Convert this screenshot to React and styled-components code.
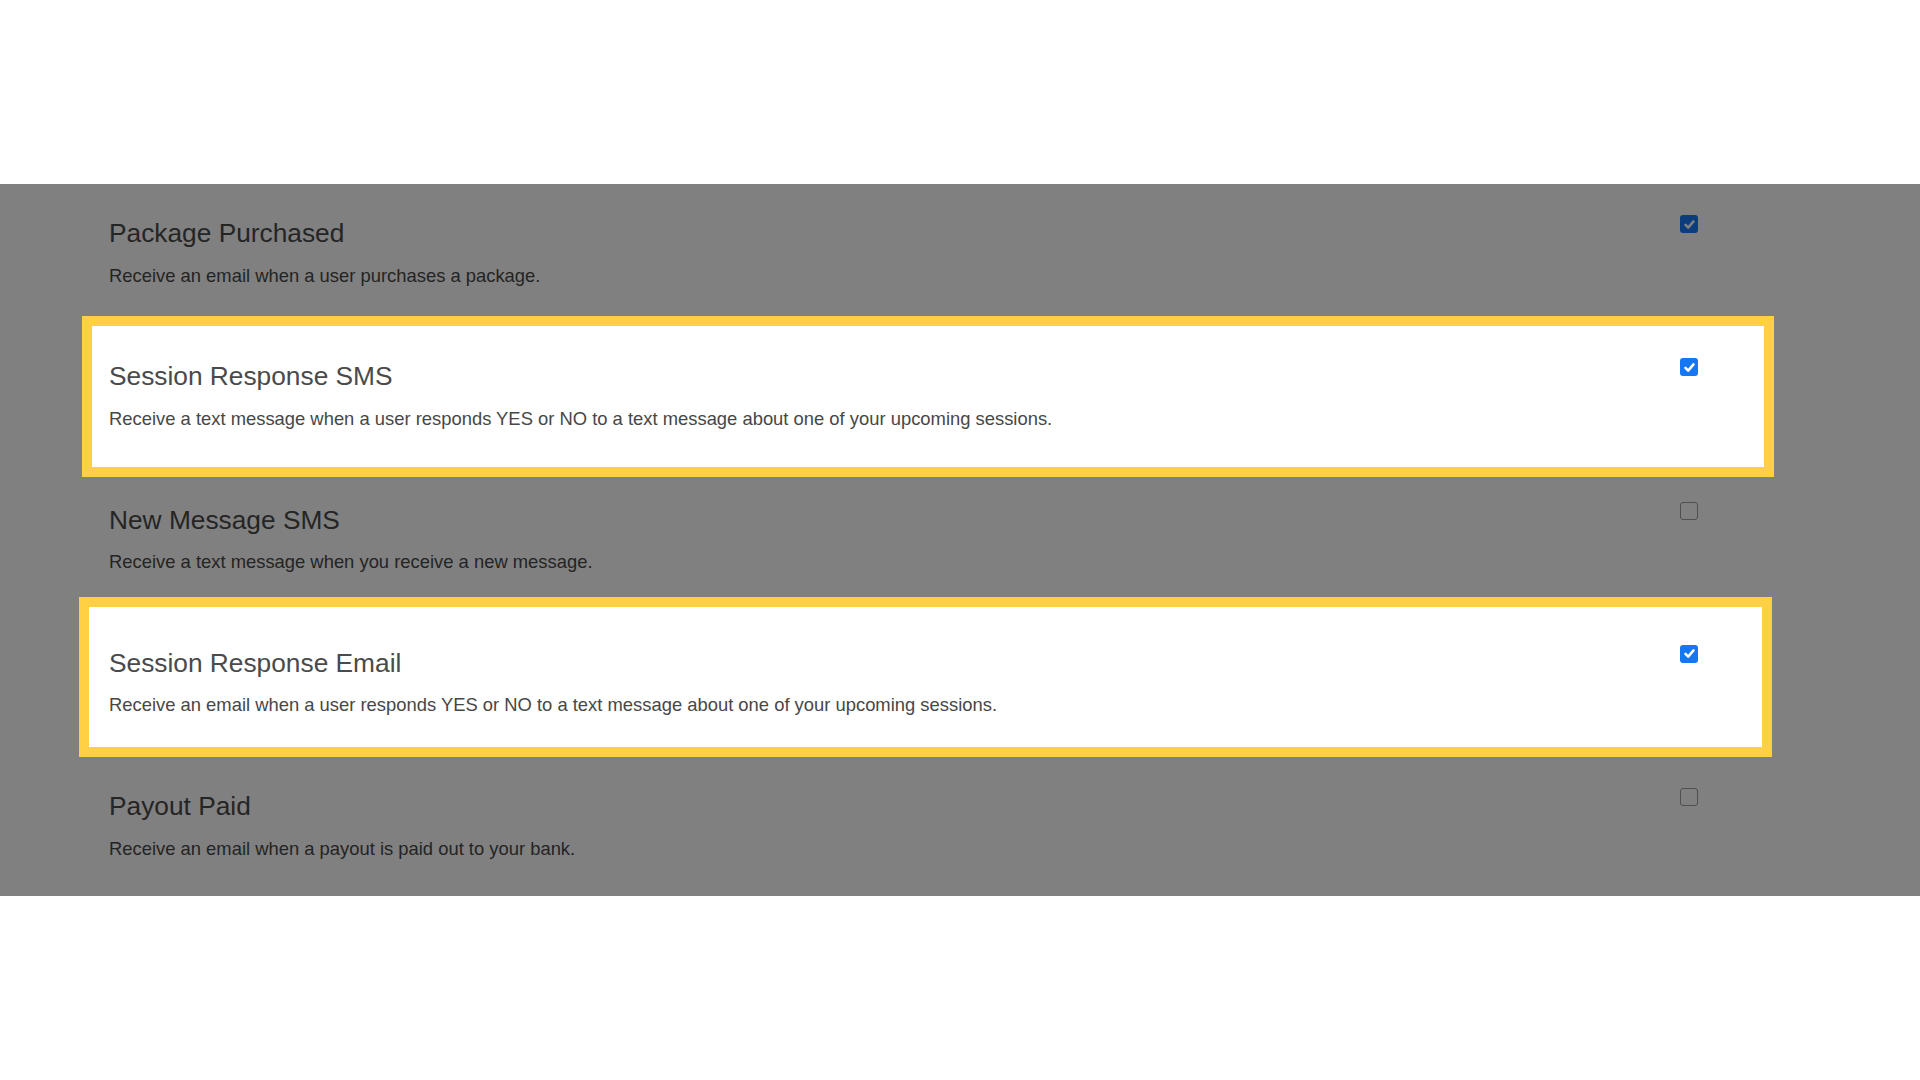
import React from "react";
import styled, { createGlobalStyle } from "styled-components";

const GlobalStyle = createGlobalStyle`
  * { box-sizing: border-box; }
  html, body { margin: 0; padding: 0; background: #fff; }
  body { font-family: "Liberation Sans", Arial, sans-serif; }
`;

// frame = how far the yellow highlight sticks out [top, right, bottom, left]
const settings = [
  {
    id: 1,
    title: "Package Purchased",
    desc: "Receive an email when a user purchases a package.",
    checked: true,
  },
  {
    id: 2,
    title: "Session Response SMS",
    desc: "Receive a text message when a user responds YES or NO to a text message about one of your upcoming sessions.",
    checked: true,
    frame: [11, 11, 6, 8],
  },
  {
    id: 3,
    title: "New Message SMS",
    desc: "Receive a text message when you receive a new message.",
    checked: false,
  },
  {
    id: 4,
    title: "Session Response Email",
    desc: "Receive an email when a user responds YES or NO to a text message about one of your upcoming sessions.",
    checked: true,
    frame: [17, 9, 0, 11],
  },
  {
    id: 5,
    title: "Payout Paid",
    desc: "Receive an email when a payout is paid out to your bank.",
    checked: false,
  },
];

const Check = ({ checked, active }) => (
  <Box $checked={checked} $active={active}>
    {checked && (
      <svg width="13" height="13" viewBox="0 0 12 12">
        <path
          d="M2.3 6.3 L4.8 8.9 L9.7 3.1"
          fill="none"
          stroke={active ? "#fff" : "#808080"}
          strokeWidth="2.3"
          strokeLinecap="round"
          strokeLinejoin="round"
        />
      </svg>
    )}
  </Box>
);

const App = () => {
  return (
    <Page>
      <GlobalStyle />
      <Band>
        <List>
          {settings.map((opt) => {
            const active = !!opt.frame;
            return (
              <Row key={opt.id} $frame={opt.frame}>
                <Text>
                  <Title $active={active}>{opt.title}</Title>
                  <Desc $active={active}>{opt.desc}</Desc>
                </Text>
                <Check checked={opt.checked} active={active} />
              </Row>
            );
          })}
        </List>
      </Band>
    </Page>
  );
};

const Page = styled.div`
  width: 100%;
  min-height: 100vh;
  padding-top: 184px;
  background: #fff;
`;

const Band = styled.div`
  width: 100%;
  background: #808080;
`;

const List = styled.div`
  margin-left: 90px;
  width: 1673px;
  display: flex;
  flex-direction: column;
`;

const Row = styled.div`
  display: grid;
  grid-template-columns: 1fr auto;
  align-items: start;
  height: 143.3px;
  padding: 31px 65px 0 19px;
  position: relative;
  isolation: isolate;

  &:last-child {
    height: 139px;
  }

  /* highlight frame drawn over the dimmed screenshot */
  &::before {
    content: "";
    display: ${(p) => (p.$frame ? "block" : "none")};
    position: absolute;
    top: ${(p) => (p.$frame ? -p.$frame[0] : 0)}px;
    right: ${(p) => (p.$frame ? -p.$frame[1] : 0)}px;
    bottom: ${(p) => (p.$frame ? -p.$frame[2] : 0)}px;
    left: ${(p) => (p.$frame ? -p.$frame[3] : 0)}px;
    background: #fff;
    border: 10px solid #ffd043;
    z-index: -1;
  }
`;

const Text = styled.div`
  padding-top: 3px;
`;

const Title = styled.h3`
  margin: 0;
  font-size: 26.3px;
  line-height: 1.2;
  font-weight: 400;
  color: ${(p) => (p.$active ? "#4a4a4a" : "#252525")};
`;

const Desc = styled.p`
  margin: 15px 0 0;
  font-size: 18.4px;
  line-height: 1.2;
  font-weight: 400;
  color: ${(p) => (p.$active ? "#474747" : "#242424")};
`;

const Box = styled.span`
  width: 18px;
  height: 18px;
  border-radius: 3px;
  display: flex;
  align-items: center;
  justify-content: center;
  background: ${(p) =>
    p.$checked ? (p.$active ? "#1677f5" : "#0b3c7b") : "transparent"};
  border: ${(p) =>
    p.$checked ? "none" : `1.6px solid ${p.$active ? "#999" : "#4f4f4f"}`};
`;

export default App;
